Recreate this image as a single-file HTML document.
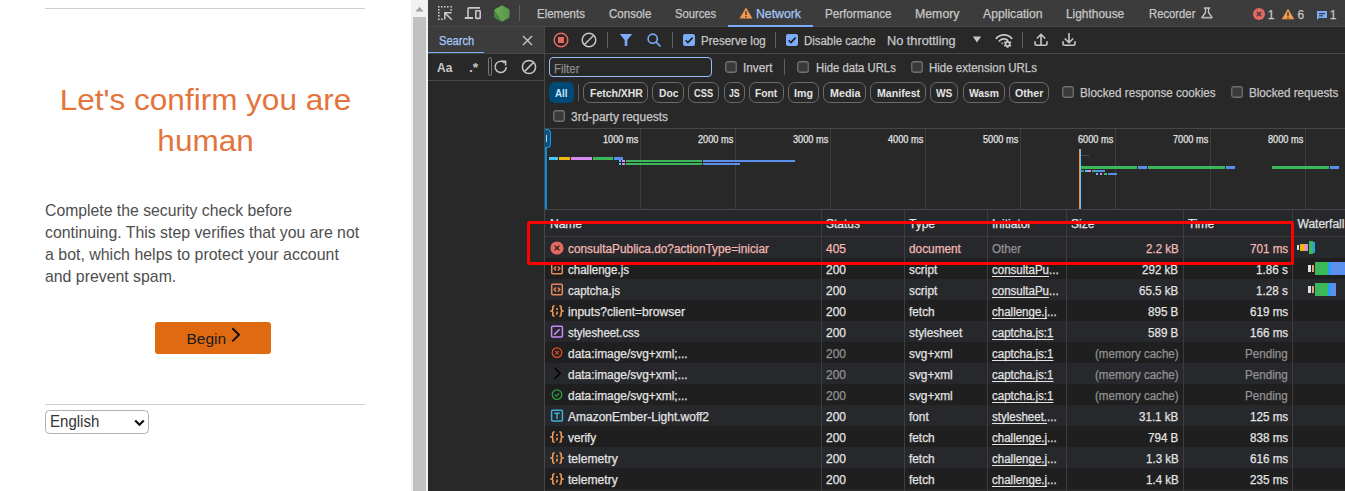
<!DOCTYPE html>
<html><head><meta charset="utf-8">
<style>
*{margin:0;padding:0;box-sizing:border-box}
html,body{width:1345px;height:491px;overflow:hidden;background:#fff;font-family:"Liberation Sans",sans-serif;position:relative}
.a{position:absolute}
.t{position:absolute;white-space:nowrap;-webkit-text-stroke:0.25px currentColor}
#page{position:absolute;left:0;top:0;width:411px;height:491px;background:#fff}
.hr{position:absolute;left:45px;width:320px;height:1px;background:#cfcfcf}
.h1{position:absolute;left:0;width:411px;text-align:center;color:#e06d30;font-size:30px;letter-spacing:0.5px;line-height:40.5px;top:80px;font-weight:400}
.p{position:absolute;left:45px;top:200px;font-size:15.7px;line-height:22px;color:#333}
.btn{position:absolute;left:155px;top:322px;width:116px;height:32px;background:#e06a12;border-radius:3px}
.sel{position:absolute;left:45px;top:410px;width:103.5px;height:24px;border:1px solid #b0b0b0;border-radius:4.5px;background:#fff}
</style></head><body>
<div id="page">
  <div class="hr" style="top:8px"></div>
  <div class="a" style="left:0;top:80px;width:411px;text-align:center;font-size:30px;line-height:40.5px;color:#e3743b;transform:scaleX(1.05);transform-origin:205.5px 0;white-space:nowrap">Let's confirm you are</div>
  <div class="a" style="left:0;top:120.5px;width:411px;text-align:center;font-size:30px;line-height:40.5px;color:#e3743b;transform:scaleX(1.05);transform-origin:205px 0;white-space:nowrap">human</div>
  <div class="a" style="left:45px;top:200px;font-size:15.7px;line-height:22px;color:#4e4e4e;white-space:nowrap;transform:scaleX(1.005);transform-origin:0 0">Complete the security check before</div>
  <div class="a" style="left:45px;top:222px;font-size:15.7px;line-height:22px;color:#4e4e4e;white-space:nowrap;transform:scaleX(1.01);transform-origin:0 0">continuing. This step verifies that you are not</div>
  <div class="a" style="left:45px;top:244px;font-size:15.7px;line-height:22px;color:#4e4e4e;white-space:nowrap;transform:scaleX(1.015);transform-origin:0 0">a bot, which helps to protect your account</div>
  <div class="a" style="left:45px;top:266px;font-size:15.7px;line-height:22px;color:#4e4e4e;white-space:nowrap;transform:scaleX(1.01);transform-origin:0 0">and prevent spam.</div>
  <div class="btn"><span class="a" style="left:31.5px;top:7.5px;font-size:15.5px;line-height:17px;color:#1a1a1a;white-space:nowrap">Begin</span><svg class="a" style="left:75px;top:5px" width="11" height="17" viewBox="0 0 11 17"><path d="M2.3 1.2 L9 7.8 L2.3 14.4" fill="none" stroke="#111" stroke-width="2"/></svg></div>
  <div class="hr" style="top:404px"></div>
  <div class="sel"><span class="a" style="left:4.3px;top:2px;font-size:16px;line-height:17px;color:#333;transform:scaleX(0.94);transform-origin:0 0;white-space:nowrap">English</span><svg class="a" style="left:88px;top:8px" width="11" height="8" viewBox="0 0 11 8"><path d="M1.2 1.5 L5.5 5.8 L9.8 1.5" fill="none" stroke="#111" stroke-width="2.2"/></svg></div>
</div>

<div class="a" style="left:411px;top:0;width:17px;height:491px;background:#f1f1f1"></div>
<div class="a" style="left:413px;top:17px;width:13px;height:474px;background:#c1c1c1"></div>
<svg class="a" style="left:415px;top:6px" width="9" height="6" viewBox="0 0 9 6"><path d="M0.5 5.5 L4.5 0.8 L8.5 5.5 Z" fill="#a3a3a3"/></svg>
<div class="a" style="left:428px;top:0px;width:917px;height:491px;background:#282828;"></div>
<div class="a" style="left:428px;top:0px;width:917px;height:26px;background:#3c3c3c;"></div>
<div class="a" style="left:428px;top:26px;width:917px;height:1px;background:#474747;"></div>
<div class="a" style="left:428px;top:27px;width:116px;height:26px;background:#3c3c3c;"></div>
<div class="a" style="left:428px;top:52px;width:56px;height:2px;background:#7cacf8;"></div>
<div class="a" style="left:428px;top:53px;width:917px;height:1px;background:#474747;"></div>
<div class="a" style="left:428px;top:80px;width:116px;height:1px;background:#474747;"></div>
<div class="a" style="left:544px;top:27px;width:1px;height:464px;background:#474747;"></div>
<div class="a" style="left:545px;top:128px;width:800px;height:1px;background:#474747;"></div>
<div class="a" style="left:545px;top:209px;width:800px;height:1px;background:#474747;"></div>
<svg class="a" style="left:438px;top:6px;" width="15" height="15" viewBox="0 0 15 15"><g fill="#c7c7c7"><rect x="0" y="0" width="1.6" height="1.6"/><rect x="3" y="0" width="1.6" height="1.6"/><rect x="6" y="0" width="1.6" height="1.6"/><rect x="9" y="0" width="1.6" height="1.6"/><rect x="12.4" y="0" width="1.6" height="1.6"/><rect x="0" y="3" width="1.6" height="1.6"/><rect x="0" y="6" width="1.6" height="1.6"/><rect x="0" y="9" width="1.6" height="1.6"/><rect x="0" y="12.4" width="1.6" height="1.6"/><rect x="12.4" y="3" width="1.6" height="1.6"/><rect x="3" y="12.4" width="1.6" height="1.6"/></g><path d="M6.6 6.6 L13.8 13.8 M6 6.8 H13.5 M6.8 6 V13.5" stroke="#c7c7c7" stroke-width="1.5" fill="none"/></svg>
<svg class="a" style="left:464px;top:6px;" width="18" height="14" viewBox="0 0 18 14"><path d="M4 12 V3 Q4 1.9 5.1 1.9 H16" stroke="#c7c7c7" stroke-width="1.6" fill="none"/><path d="M0.8 12 H9" stroke="#c7c7c7" stroke-width="2"/><rect x="11.8" y="4.8" width="4.4" height="7.6" rx="0.6" stroke="#c7c7c7" stroke-width="1.6" fill="none"/></svg>
<svg class="a" style="left:494px;top:5px;" width="16" height="17" viewBox="0 0 16 17"><defs><linearGradient id="ng" x1="0" x2="1"><stop offset="0" stop-color="#6aaf52"/><stop offset="1" stop-color="#5a9450"/></linearGradient></defs><path d="M8 0.3 L15.5 4.5 V12.5 L8 16.7 L0.5 12.5 V4.5 Z" fill="url(#ng)"/><path d="M0.5 5 L8 16.7 L0.5 12.5 Z" fill="#3f8a3a"/></svg>
<div class="a" style="left:519px;top:5px;width:1px;height:16px;background:#5e5e5e;"></div>
<svg class="a" style="left:739px;top:7px;" width="14" height="12" viewBox="0 0 14 12"><path d="M7 0.5 L13.5 11.5 H0.5 Z" fill="#f29952"/><rect x="6.3" y="4" width="1.4" height="4" fill="#3c3c3c"/><rect x="6.3" y="9" width="1.4" height="1.4" fill="#3c3c3c"/></svg>
<div class="a" style="left:728px;top:25px;width:85px;height:2px;background:#7cacf8;"></div>
<svg class="a" style="left:1200px;top:6px;" width="14" height="14" viewBox="0 0 14 14"><path d="M3.8 2 H10.2" stroke="#c7c7c7" stroke-width="1.4"/><path d="M5.5 2 V6.5 L1.8 11.6 H12.2 L8.5 6.5 V2" stroke="#c7c7c7" stroke-width="1.3" fill="none" stroke-linejoin="round"/><path d="M2.3 11.6 H11.7" stroke="#b0b0b0" stroke-width="1.6"/></svg>
<svg class="a" style="left:1253px;top:8px;" width="12" height="12" viewBox="0 0 12 12"><circle cx="6" cy="6" r="6" fill="#e46962"/><path d="M3.8 3.8 L8.2 8.2 M8.2 3.8 L3.8 8.2" stroke="#3c3c3c" stroke-width="1.3"/></svg>
<svg class="a" style="left:1281px;top:8px;" width="14" height="12" viewBox="0 0 14 12"><path d="M7 0.8 L13.3 11.3 H0.7 Z" fill="#f29952"/><rect x="6.3" y="4" width="1.4" height="4" fill="#3c3c3c"/><rect x="6.3" y="9" width="1.4" height="1.4" fill="#3c3c3c"/></svg>
<svg class="a" style="left:1316px;top:10px;" width="12" height="11" viewBox="0 0 12 11"><path d="M1 1 H11 V8 H3 L1 10 Z" fill="#7cacf8"/><rect x="3" y="3" width="6" height="1.2" fill="#3c3c3c"/><rect x="3" y="5.2" width="4" height="1.2" fill="#3c3c3c"/></svg>
<svg class="a" style="left:522px;top:34.5px;" width="11" height="11" viewBox="0 0 11 11"><path d="M1 1 L10 10 M10 1 L1 10" stroke="#c7c7c7" stroke-width="1.4"/></svg>
<svg class="a" style="left:553px;top:32px;" width="16" height="16" viewBox="0 0 16 16"><circle cx="8" cy="8" r="6.8" stroke="#e46962" stroke-width="1.5" fill="none"/><rect x="5" y="5" width="6" height="6" fill="#e46962"/></svg>
<svg class="a" style="left:581px;top:32px;" width="16" height="16" viewBox="0 0 16 16"><circle cx="8" cy="8" r="6.8" stroke="#c7c7c7" stroke-width="1.5" fill="none"/><path d="M12.8 3.2 L3.2 12.8" stroke="#c7c7c7" stroke-width="1.5"/></svg>
<div class="a" style="left:607px;top:32px;width:1px;height:16px;background:#5e5e5e;"></div>
<svg class="a" style="left:619px;top:33px;" width="14" height="14" viewBox="0 0 14 14"><path d="M0.8 1 H13.2 L8.3 7 V13 H5.7 V7 Z" fill="#7cacf8"/></svg>
<svg class="a" style="left:646px;top:32px;" width="16" height="16" viewBox="0 0 16 16"><circle cx="6.7" cy="6.7" r="4.6" stroke="#7cacf8" stroke-width="1.6" fill="none"/><path d="M10 10 L14.5 14.5" stroke="#7cacf8" stroke-width="1.7"/></svg>
<div class="a" style="left:672px;top:32px;width:1px;height:16px;background:#5e5e5e;"></div>
<svg class="a" style="left:683px;top:34px;" width="12" height="12" viewBox="0 0 12 12"><rect x="0" y="0" width="12" height="12" rx="2" fill="#7cacf8"/><path d="M2.6 6.2 L4.9 8.5 L9.6 3.6" stroke="#1f1f1f" stroke-width="1.6" fill="none"/></svg>
<div class="a" style="left:775px;top:32px;width:1px;height:16px;background:#5e5e5e;"></div>
<svg class="a" style="left:786px;top:34px;" width="12" height="12" viewBox="0 0 12 12"><rect x="0" y="0" width="12" height="12" rx="2" fill="#7cacf8"/><path d="M2.6 6.2 L4.9 8.5 L9.6 3.6" stroke="#1f1f1f" stroke-width="1.6" fill="none"/></svg>
<svg class="a" style="left:972px;top:36px;" width="10" height="7" viewBox="0 0 10 7"><path d="M0.8 0.5 H9.2 L5 6.5 Z" fill="#c7c7c7"/></svg>
<svg class="a" style="left:995px;top:32px;" width="18" height="16" viewBox="0 0 18 16"><path d="M1.3 6.3 A 10.5 10.5 0 0 1 16.7 6.3" stroke="#c7c7c7" stroke-width="1.7" fill="none" stroke-linecap="round"/><path d="M4.2 9 A 6.5 6.5 0 0 1 12.3 8" stroke="#c7c7c7" stroke-width="1.7" fill="none" stroke-linecap="round"/><path d="M6.2 10.2 L8.6 11.2 L6.9 12.6 Z" fill="#c7c7c7"/><g transform="translate(12.6 12)" fill="#c7c7c7"><rect x="-0.9" y="-3.9" width="1.8" height="2" transform="rotate(0)"/><rect x="-0.9" y="-3.9" width="1.8" height="2" transform="rotate(60)"/><rect x="-0.9" y="-3.9" width="1.8" height="2" transform="rotate(120)"/><rect x="-0.9" y="-3.9" width="1.8" height="2" transform="rotate(180)"/><rect x="-0.9" y="-3.9" width="1.8" height="2" transform="rotate(240)"/><rect x="-0.9" y="-3.9" width="1.8" height="2" transform="rotate(300)"/><circle r="2.9"/><circle r="1.2" fill="#282828"/></g></svg>
<div class="a" style="left:1022px;top:32px;width:1px;height:16px;background:#5e5e5e;"></div>
<svg class="a" style="left:1034px;top:32px;" width="14" height="15" viewBox="0 0 14 15"><path d="M7 13 V2.5 M2.8 6.5 L7 2.3 L11.2 6.5" stroke="#c7c7c7" stroke-width="1.6" fill="none"/><path d="M1 9.8 V11.8 Q1 13.2 2.4 13.2 H11.6 Q13 13.2 13 11.8 V9.8" stroke="#c7c7c7" stroke-width="1.6" fill="none" stroke-linecap="round"/></svg>
<svg class="a" style="left:1062px;top:32px;" width="14" height="15" viewBox="0 0 14 15"><path d="M7 1 V10.5 M2.8 6.5 L7 10.7 L11.2 6.5" stroke="#c7c7c7" stroke-width="1.6" fill="none"/><path d="M1 9.8 V11.8 Q1 13.2 2.4 13.2 H11.6 Q13 13.2 13 11.8 V9.8" stroke="#c7c7c7" stroke-width="1.6" fill="none" stroke-linecap="round"/></svg>
<div class="a" style="left:488px;top:57px;width:4px;height:19px;background:transparent;border:1px solid #777;border-radius:2px;"></div>
<svg class="a" style="left:493px;top:59px;" width="16" height="16" viewBox="0 0 16 16"><path d="M13.3 8 A 5.6 5.6 0 1 1 11.6 3.9" stroke="#c7c7c7" stroke-width="1.5" fill="none"/><path d="M8.5 2.3 H12.6 V6.4" stroke="#c7c7c7" stroke-width="1.5" fill="none"/></svg>
<svg class="a" style="left:521px;top:59px;" width="16" height="16" viewBox="0 0 16 16"><circle cx="8" cy="8" r="6.6" stroke="#c7c7c7" stroke-width="1.5" fill="none"/><path d="M12.6 3.4 L3.4 12.6" stroke="#c7c7c7" stroke-width="1.5"/></svg>
<div class="a" style="left:549px;top:57px;width:163px;height:20px;background:transparent;border:1px solid #99bdf9;border-radius:4px;"></div>
<svg class="a" style="left:725px;top:61px;" width="12" height="12" viewBox="0 0 12 12"><rect x="0.75" y="0.75" width="10.5" height="10.5" rx="2" fill="#3a3a3a" stroke="#707070" stroke-width="1.3"/></svg>
<div class="a" style="left:784px;top:59px;width:1px;height:16px;background:#5e5e5e;"></div>
<svg class="a" style="left:797px;top:61px;" width="12" height="12" viewBox="0 0 12 12"><rect x="0.75" y="0.75" width="10.5" height="10.5" rx="2" fill="#3a3a3a" stroke="#707070" stroke-width="1.3"/></svg>
<svg class="a" style="left:911px;top:61px;" width="12" height="12" viewBox="0 0 12 12"><rect x="0.75" y="0.75" width="10.5" height="10.5" rx="2" fill="#3a3a3a" stroke="#707070" stroke-width="1.3"/></svg>
<div class="a" style="left:549px;top:82px;width:25px;height:21px;background:#004a77;border-radius:6px;"></div>
<div class="a" style="left:578px;top:84px;width:1px;height:17px;background:#5e5e5e;"></div>
<div class="a" style="left:583.2px;top:82px;width:64.6px;height:21px;background:transparent;border:1px solid #6a6a6a;border-radius:7px;"></div>
<div class="a" style="left:652px;top:82px;width:31.5px;height:21px;background:transparent;border:1px solid #6a6a6a;border-radius:7px;"></div>
<div class="a" style="left:688px;top:82px;width:31px;height:21px;background:transparent;border:1px solid #6a6a6a;border-radius:7px;"></div>
<div class="a" style="left:723.5px;top:82px;width:21.1px;height:21px;background:transparent;border:1px solid #6a6a6a;border-radius:7px;"></div>
<div class="a" style="left:749.3px;top:82px;width:34.4px;height:21px;background:transparent;border:1px solid #6a6a6a;border-radius:7px;"></div>
<div class="a" style="left:788.2px;top:82px;width:30.5px;height:21px;background:transparent;border:1px solid #6a6a6a;border-radius:7px;"></div>
<div class="a" style="left:823.4px;top:82px;width:42.4px;height:21px;background:transparent;border:1px solid #6a6a6a;border-radius:7px;"></div>
<div class="a" style="left:870.3px;top:82px;width:55.6px;height:21px;background:transparent;border:1px solid #6a6a6a;border-radius:7px;"></div>
<div class="a" style="left:930.1px;top:82px;width:28.4px;height:21px;background:transparent;border:1px solid #6a6a6a;border-radius:7px;"></div>
<div class="a" style="left:963.3px;top:82px;width:41.5px;height:21px;background:transparent;border:1px solid #6a6a6a;border-radius:7px;"></div>
<div class="a" style="left:1009.3px;top:82px;width:40.0px;height:21px;background:transparent;border:1px solid #6a6a6a;border-radius:7px;"></div>
<svg class="a" style="left:1062px;top:86px;" width="12" height="12" viewBox="0 0 12 12"><rect x="0.75" y="0.75" width="10.5" height="10.5" rx="2" fill="#3a3a3a" stroke="#707070" stroke-width="1.3"/></svg>
<svg class="a" style="left:1231px;top:86px;" width="12" height="12" viewBox="0 0 12 12"><rect x="0.75" y="0.75" width="10.5" height="10.5" rx="2" fill="#3a3a3a" stroke="#707070" stroke-width="1.3"/></svg>
<svg class="a" style="left:553px;top:110px;" width="12" height="12" viewBox="0 0 12 12"><rect x="0.75" y="0.75" width="10.5" height="10.5" rx="2" fill="#3a3a3a" stroke="#707070" stroke-width="1.3"/></svg>
<div class="a" style="left:640px;top:129px;width:1px;height:80px;background:#3d3d3d;"></div>
<div class="a" style="left:735px;top:129px;width:1px;height:80px;background:#3d3d3d;"></div>
<div class="a" style="left:830px;top:129px;width:1px;height:80px;background:#3d3d3d;"></div>
<div class="a" style="left:925px;top:129px;width:1px;height:80px;background:#3d3d3d;"></div>
<div class="a" style="left:1020px;top:129px;width:1px;height:80px;background:#3d3d3d;"></div>
<div class="a" style="left:1115px;top:129px;width:1px;height:80px;background:#3d3d3d;"></div>
<div class="a" style="left:1210px;top:129px;width:1px;height:80px;background:#3d3d3d;"></div>
<div class="a" style="left:1305px;top:129px;width:1px;height:80px;background:#3d3d3d;"></div>
<div class="a" style="left:545px;top:210px;width:800px;height:26px;background:#27282b;"></div>
<div class="a" style="left:545px;top:146px;width:2px;height:63px;background:#0a8fd6;"></div>
<div class="a" style="left:545px;top:129px;width:5.5px;height:18.5px;background:#0b5285;border:1px solid #0c9ae3;border-left:none;border-radius:0 4px 4px 0;"></div>
<div class="a" style="left:546px;top:135px;width:1.3px;height:7px;background:#b8cdf7;"></div>
<div class="a" style="left:549px;top:157px;width:9px;height:2.7px;background:#4fc3f7;"></div>
<div class="a" style="left:559px;top:157px;width:11px;height:2.7px;background:#f0b50e;"></div>
<div class="a" style="left:571px;top:157px;width:20.5px;height:2.7px;background:#d68bf5;"></div>
<div class="a" style="left:592.7px;top:157px;width:20.3px;height:2.7px;background:#3bb85a;"></div>
<div class="a" style="left:614px;top:157px;width:9px;height:2.7px;background:#5a8fee;"></div>
<div class="a" style="left:618.6px;top:160.2px;width:2.4px;height:2.3px;background:#4fc3f7;"></div>
<div class="a" style="left:622px;top:160.2px;width:3px;height:2.3px;background:#d68bf5;"></div>
<div class="a" style="left:626px;top:160.2px;width:76.2px;height:2.3px;background:#3bb85a;"></div>
<div class="a" style="left:703px;top:160.2px;width:92.2px;height:2.3px;background:#5a8fee;"></div>
<div class="a" style="left:618.6px;top:163.2px;width:2.4px;height:2.3px;background:#4fc3f7;"></div>
<div class="a" style="left:622px;top:163.2px;width:3px;height:2.3px;background:#d68bf5;"></div>
<div class="a" style="left:626px;top:163.2px;width:76.2px;height:2.3px;background:#3bb85a;"></div>
<div class="a" style="left:703px;top:163.2px;width:37px;height:2.3px;background:#5a8fee;"></div>
<div class="a" style="left:1079px;top:149px;width:1px;height:60px;background:#f28b54;"></div>
<div class="a" style="left:1080px;top:149px;width:1px;height:60px;background:#4fd3f7;"></div>
<div class="a" style="left:1081.4px;top:154.6px;width:7.9px;height:1.8px;background:#4a4a4a;"></div>
<div class="a" style="left:1081px;top:166.3px;width:56px;height:2.6px;background:#3bb85a;"></div>
<div class="a" style="left:1138px;top:166.3px;width:9px;height:2.6px;background:#5a8fee;"></div>
<div class="a" style="left:1148px;top:166.3px;width:77px;height:2.6px;background:#3bb85a;"></div>
<div class="a" style="left:1225.5px;top:166.3px;width:9.5px;height:2.6px;background:#5a8fee;"></div>
<div class="a" style="left:1272px;top:166.3px;width:57px;height:2.6px;background:#3bb85a;"></div>
<div class="a" style="left:1330px;top:166.3px;width:9px;height:2.6px;background:#5a8fee;"></div>
<div class="a" style="left:1081px;top:169.6px;width:3px;height:2.1px;background:#777;"></div>
<div class="a" style="left:1085px;top:169.6px;width:2.5px;height:2.1px;background:#4fc3f7;"></div>
<div class="a" style="left:1088px;top:169.6px;width:3px;height:2.1px;background:#d68bf5;"></div>
<div class="a" style="left:1092px;top:169.6px;width:2.5px;height:2.1px;background:#3bb85a;"></div>
<div class="a" style="left:1095.3px;top:169.6px;width:9.5px;height:2.1px;background:#5a8fee;"></div>
<div class="a" style="left:1096.4px;top:172.5px;width:2.1px;height:2.3px;background:#4fc3f7;"></div>
<div class="a" style="left:1099.7px;top:172.5px;width:2.7px;height:2.3px;background:#d68bf5;"></div>
<div class="a" style="left:1103.8px;top:172.5px;width:3.2px;height:2.3px;background:#3bb85a;"></div>
<div class="a" style="left:1107.8px;top:172.5px;width:9.2px;height:2.3px;background:#5a8fee;"></div>
<div class="a" style="left:545px;top:237px;width:800px;height:21px;background:#27282b;"></div>
<div class="a" style="left:545px;top:258px;width:800px;height:21px;background:#1f1f1f;"></div>
<div class="a" style="left:545px;top:279px;width:800px;height:21px;background:#27282b;"></div>
<div class="a" style="left:545px;top:300px;width:800px;height:21px;background:#1f1f1f;"></div>
<div class="a" style="left:545px;top:321px;width:800px;height:21px;background:#27282b;"></div>
<div class="a" style="left:545px;top:342px;width:800px;height:21px;background:#1f1f1f;"></div>
<div class="a" style="left:545px;top:363px;width:800px;height:21px;background:#27282b;"></div>
<div class="a" style="left:545px;top:384px;width:800px;height:21px;background:#1f1f1f;"></div>
<div class="a" style="left:545px;top:405px;width:800px;height:21px;background:#27282b;"></div>
<div class="a" style="left:545px;top:426px;width:800px;height:21px;background:#1f1f1f;"></div>
<div class="a" style="left:545px;top:447px;width:800px;height:21px;background:#27282b;"></div>
<div class="a" style="left:545px;top:468px;width:800px;height:21px;background:#1f1f1f;"></div>
<div class="a" style="left:821px;top:210px;width:1px;height:281px;background:#3d3d3d;"></div>
<div class="a" style="left:904px;top:210px;width:1px;height:281px;background:#3d3d3d;"></div>
<div class="a" style="left:987px;top:210px;width:1px;height:281px;background:#3d3d3d;"></div>
<div class="a" style="left:1066px;top:210px;width:1px;height:281px;background:#3d3d3d;"></div>
<div class="a" style="left:1183px;top:210px;width:1px;height:281px;background:#3d3d3d;"></div>
<div class="a" style="left:1292px;top:210px;width:1px;height:281px;background:#3d3d3d;"></div>
<div class="a" style="left:545px;top:236px;width:800px;height:1px;background:#3d3d3d;"></div>
<svg class="a" style="left:550px;top:241px;" width="14" height="14" viewBox="0 0 14 14"><circle cx="7" cy="7" r="6.6" fill="#e46962"/><path d="M4.6 4.6 L9.4 9.4 M9.4 4.6 L4.6 9.4" stroke="#1f1f1f" stroke-width="1.3"/></svg>
<svg class="a" style="left:550px;top:262px;" width="14" height="14" viewBox="0 0 14 14"><rect x="1.7" y="1.2" width="10.6" height="10.6" rx="1" stroke="#e8875a" stroke-width="1.5" fill="none"/><path d="M6.1 4.6 L4.2 6.5 L6.1 8.4 M7.9 4.6 L9.8 6.5 L7.9 8.4" stroke="#e8875a" stroke-width="1.4" fill="none"/></svg>
<svg class="a" style="left:550px;top:283px;" width="14" height="14" viewBox="0 0 14 14"><rect x="1.7" y="1.2" width="10.6" height="10.6" rx="1" stroke="#e8875a" stroke-width="1.5" fill="none"/><path d="M6.1 4.6 L4.2 6.5 L6.1 8.4 M7.9 4.6 L9.8 6.5 L7.9 8.4" stroke="#e8875a" stroke-width="1.4" fill="none"/></svg>
<svg class="a" style="left:550px;top:304px;" width="14" height="14" viewBox="0 0 14 14"><path d="M4.6 1.8 Q2.8 1.8 2.8 3.5 V5.4 Q2.8 6.6 1.3 7 Q2.8 7.4 2.8 8.6 V10.5 Q2.8 12.2 4.6 12.2 M9.4 1.8 Q11.2 1.8 11.2 3.5 V5.4 Q11.2 6.6 12.7 7 Q11.2 7.4 11.2 8.6 V10.5 Q11.2 12.2 9.4 12.2" stroke="#f09a5a" stroke-width="1.6" fill="none"/><circle cx="7" cy="4.9" r="1" fill="#f09a5a"/><path d="M7.1 7.4 V9.4 L6.2 10.4" stroke="#f09a5a" stroke-width="1.5" fill="none"/></svg>
<svg class="a" style="left:550px;top:325px;" width="14" height="14" viewBox="0 0 14 14"><rect x="1.6" y="1.2" width="10.8" height="10.8" rx="1" stroke="#c58af9" stroke-width="1.5" fill="none"/><path d="M4.2 9.6 L9.6 4.2" stroke="#c58af9" stroke-width="1.6"/></svg>
<svg class="a" style="left:550px;top:346px;" width="14" height="14" viewBox="0 0 14 14"><circle cx="7" cy="6.6" r="4.8" stroke="#e2502f" stroke-width="1.2" fill="none"/><path d="M5.3 4.9 L8.7 8.3 M8.7 4.9 L5.3 8.3" stroke="#e2502f" stroke-width="1.1"/></svg>
<svg class="a" style="left:550px;top:366px;" width="14" height="15" viewBox="0 0 14 15"><path d="M4.5 1.8 L10 7.3 L4.5 12.8" stroke="#000" stroke-width="1.6" fill="none"/></svg>
<svg class="a" style="left:550px;top:388px;" width="14" height="14" viewBox="0 0 14 14"><circle cx="7" cy="6.6" r="4.8" stroke="#2aa53a" stroke-width="1.2" fill="none"/><path d="M4.9 6.7 L6.4 8.2 L9.2 5.4" stroke="#2aa53a" stroke-width="1.2" fill="none"/></svg>
<svg class="a" style="left:550px;top:409px;" width="14" height="14" viewBox="0 0 14 14"><rect x="1.6" y="1.2" width="10.8" height="10.8" rx="1" stroke="#3fb1d6" stroke-width="1.5" fill="none"/><path d="M4.3 4.3 H9.7 M7 4.3 V10" stroke="#3fb1d6" stroke-width="1.5"/></svg>
<svg class="a" style="left:550px;top:430px;" width="14" height="14" viewBox="0 0 14 14"><path d="M4.6 1.8 Q2.8 1.8 2.8 3.5 V5.4 Q2.8 6.6 1.3 7 Q2.8 7.4 2.8 8.6 V10.5 Q2.8 12.2 4.6 12.2 M9.4 1.8 Q11.2 1.8 11.2 3.5 V5.4 Q11.2 6.6 12.7 7 Q11.2 7.4 11.2 8.6 V10.5 Q11.2 12.2 9.4 12.2" stroke="#f09a5a" stroke-width="1.6" fill="none"/><circle cx="7" cy="4.9" r="1" fill="#f09a5a"/><path d="M7.1 7.4 V9.4 L6.2 10.4" stroke="#f09a5a" stroke-width="1.5" fill="none"/></svg>
<svg class="a" style="left:550px;top:451px;" width="14" height="14" viewBox="0 0 14 14"><path d="M4.6 1.8 Q2.8 1.8 2.8 3.5 V5.4 Q2.8 6.6 1.3 7 Q2.8 7.4 2.8 8.6 V10.5 Q2.8 12.2 4.6 12.2 M9.4 1.8 Q11.2 1.8 11.2 3.5 V5.4 Q11.2 6.6 12.7 7 Q11.2 7.4 11.2 8.6 V10.5 Q11.2 12.2 9.4 12.2" stroke="#f09a5a" stroke-width="1.6" fill="none"/><circle cx="7" cy="4.9" r="1" fill="#f09a5a"/><path d="M7.1 7.4 V9.4 L6.2 10.4" stroke="#f09a5a" stroke-width="1.5" fill="none"/></svg>
<svg class="a" style="left:550px;top:472px;" width="14" height="14" viewBox="0 0 14 14"><path d="M4.6 1.8 Q2.8 1.8 2.8 3.5 V5.4 Q2.8 6.6 1.3 7 Q2.8 7.4 2.8 8.6 V10.5 Q2.8 12.2 4.6 12.2 M9.4 1.8 Q11.2 1.8 11.2 3.5 V5.4 Q11.2 6.6 12.7 7 Q11.2 7.4 11.2 8.6 V10.5 Q11.2 12.2 9.4 12.2" stroke="#f09a5a" stroke-width="1.6" fill="none"/><circle cx="7" cy="4.9" r="1" fill="#f09a5a"/><path d="M7.1 7.4 V9.4 L6.2 10.4" stroke="#f09a5a" stroke-width="1.5" fill="none"/></svg>
<div class="a" style="left:1296.8px;top:244.9px;width:2.3px;height:5.2px;background:#e0e0e0;"></div>
<div class="a" style="left:1300.2px;top:243.8px;width:4.8px;height:7.2px;background:#f0b50e;"></div>
<div class="a" style="left:1305px;top:243.8px;width:3.2px;height:7.2px;background:#d68bf5;"></div>
<div class="a" style="left:1308.9px;top:241px;width:4.3px;height:13px;background:#3bb85a;"></div>
<div class="a" style="left:1313.2px;top:241.9px;width:1.8px;height:11.1px;background:#1aa3f5;"></div>
<div class="a" style="left:1307.9px;top:265.3px;width:3px;height:6.6px;background:#e0e0e0;"></div>
<div class="a" style="left:1311.9px;top:265.3px;width:1.2px;height:6.6px;background:#f0b50e;"></div>
<div class="a" style="left:1313.1px;top:265.3px;width:1px;height:6.6px;background:#d68bf5;"></div>
<div class="a" style="left:1314.8px;top:261.8px;width:13.2px;height:13px;background:#3bb85a;"></div>
<div class="a" style="left:1328px;top:261.8px;width:1.5px;height:13px;background:#1aa3f5;"></div>
<div class="a" style="left:1329.5px;top:261.8px;width:15.5px;height:13px;background:#5a8fee;"></div>
<div class="a" style="left:1307.9px;top:286.3px;width:3px;height:6.6px;background:#e0e0e0;"></div>
<div class="a" style="left:1311.9px;top:286.3px;width:1.2px;height:6.6px;background:#f0b50e;"></div>
<div class="a" style="left:1313.1px;top:286.3px;width:1px;height:6.6px;background:#d68bf5;"></div>
<div class="a" style="left:1314.8px;top:282.7px;width:13.2px;height:13.3px;background:#3bb85a;"></div>
<div class="a" style="left:1328px;top:282.7px;width:1.5px;height:13.3px;background:#1aa3f5;"></div>
<div class="a" style="left:1329.5px;top:282.7px;width:6.4px;height:13.3px;background:#5a8fee;"></div>
<div class="t" style="left:537.30px;top:6.84px;font-size:12px;line-height:14px;color:#c7c7c7;font-weight:400;transform:scaleX(0.9576);transform-origin:0 0;">Elements</div>
<div class="t" style="left:608.70px;top:6.84px;font-size:12px;line-height:14px;color:#c7c7c7;font-weight:400;transform:scaleX(0.9608);transform-origin:0 0;">Console</div>
<div class="t" style="left:674.50px;top:6.84px;font-size:12px;line-height:14px;color:#c7c7c7;font-weight:400;transform:scaleX(0.9359);transform-origin:0 0;">Sources</div>
<div class="t" style="left:755.70px;top:6.84px;font-size:12px;line-height:14px;color:#a8c7fa;font-weight:400;transform:scaleX(1.0225);transform-origin:0 0;">Network</div>
<div class="t" style="left:824.80px;top:6.84px;font-size:12px;line-height:14px;color:#c7c7c7;font-weight:400;transform:scaleX(0.9680);transform-origin:0 0;">Performance</div>
<div class="t" style="left:914.50px;top:6.84px;font-size:12px;line-height:14px;color:#c7c7c7;font-weight:400;transform:scaleX(1.0269);transform-origin:0 0;">Memory</div>
<div class="t" style="left:982.80px;top:6.84px;font-size:12px;line-height:14px;color:#c7c7c7;font-weight:400;transform:scaleX(1.0152);transform-origin:0 0;">Application</div>
<div class="t" style="left:1066.40px;top:6.84px;font-size:12px;line-height:14px;color:#c7c7c7;font-weight:400;transform:scaleX(0.9912);transform-origin:0 0;">Lighthouse</div>
<div class="t" style="left:1148.60px;top:6.84px;font-size:12px;line-height:14px;color:#c7c7c7;font-weight:400;transform:scaleX(0.9402);transform-origin:0 0;">Recorder</div>
<div class="t" style="left:1267.80px;top:7.84px;font-size:12px;line-height:14px;color:#c7c7c7;font-weight:400;">1</div>
<div class="t" style="left:1297.60px;top:7.84px;font-size:12px;line-height:14px;color:#c7c7c7;font-weight:400;">6</div>
<div class="t" style="left:1329.80px;top:7.84px;font-size:12px;line-height:14px;color:#c7c7c7;font-weight:400;">1</div>
<div class="t" style="left:438.50px;top:33.84px;font-size:12px;line-height:14px;color:#a8c7fa;font-weight:400;transform:scaleX(0.9258);transform-origin:0 0;">Search</div>
<div class="t" style="left:701.00px;top:33.84px;font-size:12px;line-height:14px;color:#c7c7c7;font-weight:400;transform:scaleX(0.9604);transform-origin:0 0;">Preserve log</div>
<div class="t" style="left:804.30px;top:33.84px;font-size:12px;line-height:14px;color:#c7c7c7;font-weight:400;transform:scaleX(0.9512);transform-origin:0 0;">Disable cache</div>
<div class="t" style="left:887.30px;top:33.84px;font-size:12px;line-height:14px;color:#c7c7c7;font-weight:400;transform:scaleX(1.0618);transform-origin:0 0;">No throttling</div>
<div class="t" style="left:437.20px;top:60.84px;font-size:12px;line-height:14px;color:#c7c7c7;font-weight:700;transform:scaleX(0.9974);transform-origin:0 0;-webkit-text-stroke:0;">Aa</div>
<div class="t" style="left:468.70px;top:59.50px;font-size:13px;line-height:16px;color:#c7c7c7;font-weight:700;transform:scaleX(1.0726);transform-origin:0 0;-webkit-text-stroke:0;">.*</div>
<div class="t" style="left:553.50px;top:61.84px;font-size:12px;line-height:14px;color:#8a8a8a;font-weight:400;transform:scaleX(0.9563);transform-origin:0 0;">Filter</div>
<div class="t" style="left:743.40px;top:60.84px;font-size:12px;line-height:14px;color:#c7c7c7;font-weight:400;transform:scaleX(0.9796);transform-origin:0 0;">Invert</div>
<div class="t" style="left:815.70px;top:60.84px;font-size:12px;line-height:14px;color:#c7c7c7;font-weight:400;transform:scaleX(0.9420);transform-origin:0 0;">Hide data URLs</div>
<div class="t" style="left:929.40px;top:60.84px;font-size:12px;line-height:14px;color:#c7c7c7;font-weight:400;transform:scaleX(0.9581);transform-origin:0 0;">Hide extension URLs</div>
<div class="t" style="left:555.40px;top:86.69px;font-size:11px;line-height:13px;color:#c2e7ff;font-weight:700;transform:scaleX(0.8964);transform-origin:0 0;-webkit-text-stroke:0;">All</div>
<div class="t" style="left:589.60px;top:86.69px;font-size:11px;line-height:13px;color:#e3e3e3;font-weight:700;transform:scaleX(0.9511);transform-origin:0 0;-webkit-text-stroke:0;">Fetch/XHR</div>
<div class="t" style="left:658.80px;top:86.69px;font-size:11px;line-height:13px;color:#e3e3e3;font-weight:700;transform:scaleX(0.9336);transform-origin:0 0;-webkit-text-stroke:0;">Doc</div>
<div class="t" style="left:693.90px;top:86.69px;font-size:11px;line-height:13px;color:#e3e3e3;font-weight:700;transform:scaleX(0.8445);transform-origin:0 0;-webkit-text-stroke:0;">CSS</div>
<div class="t" style="left:728.50px;top:86.69px;font-size:11px;line-height:13px;color:#e3e3e3;font-weight:700;transform:scaleX(0.7953);transform-origin:0 0;-webkit-text-stroke:0;">JS</div>
<div class="t" style="left:755.40px;top:86.69px;font-size:11px;line-height:13px;color:#e3e3e3;font-weight:700;transform:scaleX(0.9320);transform-origin:0 0;-webkit-text-stroke:0;">Font</div>
<div class="t" style="left:793.80px;top:86.69px;font-size:11px;line-height:13px;color:#e3e3e3;font-weight:700;transform:scaleX(0.9716);transform-origin:0 0;-webkit-text-stroke:0;">Img</div>
<div class="t" style="left:829.50px;top:86.69px;font-size:11px;line-height:13px;color:#e3e3e3;font-weight:700;transform:scaleX(0.9784);transform-origin:0 0;-webkit-text-stroke:0;">Media</div>
<div class="t" style="left:876.90px;top:86.69px;font-size:11px;line-height:13px;color:#e3e3e3;font-weight:700;transform:scaleX(0.9660);transform-origin:0 0;-webkit-text-stroke:0;">Manifest</div>
<div class="t" style="left:936.00px;top:86.69px;font-size:11px;line-height:13px;color:#e3e3e3;font-weight:700;transform:scaleX(0.9255);transform-origin:0 0;-webkit-text-stroke:0;">WS</div>
<div class="t" style="left:969.00px;top:86.69px;font-size:11px;line-height:13px;color:#e3e3e3;font-weight:700;transform:scaleX(0.9378);transform-origin:0 0;-webkit-text-stroke:0;">Wasm</div>
<div class="t" style="left:1014.90px;top:86.69px;font-size:11px;line-height:13px;color:#e3e3e3;font-weight:700;transform:scaleX(0.9647);transform-origin:0 0;-webkit-text-stroke:0;">Other</div>
<div class="t" style="left:1079.90px;top:85.84px;font-size:12px;line-height:14px;color:#c7c7c7;font-weight:400;transform:scaleX(0.9727);transform-origin:0 0;">Blocked response cookies</div>
<div class="t" style="left:1248.60px;top:85.84px;font-size:12px;line-height:14px;color:#c7c7c7;font-weight:400;transform:scaleX(0.9712);transform-origin:0 0;">Blocked requests</div>
<div class="t" style="left:571.30px;top:109.84px;font-size:12px;line-height:14px;color:#c7c7c7;font-weight:400;transform:scaleX(0.9972);transform-origin:0 0;">3rd-party requests</div>
<div class="t" style="left:550.00px;top:216.84px;font-size:12px;line-height:14px;color:#e3e3e3;font-weight:400;">Name</div>
<div class="t" style="left:826.00px;top:216.84px;font-size:12px;line-height:14px;color:#e3e3e3;font-weight:400;">Status</div>
<div class="t" style="left:909.00px;top:216.84px;font-size:12px;line-height:14px;color:#e3e3e3;font-weight:400;">Type</div>
<div class="t" style="left:992.00px;top:216.84px;font-size:12px;line-height:14px;color:#e3e3e3;font-weight:400;">Initiator</div>
<div class="t" style="left:1071.00px;top:216.84px;font-size:12px;line-height:14px;color:#e3e3e3;font-weight:400;">Size</div>
<div class="t" style="left:1188.00px;top:216.84px;font-size:12px;line-height:14px;color:#e3e3e3;font-weight:400;">Time</div>
<div class="t" style="left:1297.50px;top:216.84px;font-size:12px;line-height:14px;color:#e3e3e3;font-weight:400;">Waterfall</div>
<div class="t" style="left:568.00px;top:241.84px;font-size:12px;line-height:14px;color:#f2b8b5;font-weight:400;transform:scaleX(0.9863);transform-origin:0 0;">consultaPublica.do?actionType=iniciar</div>
<div class="t" style="left:826.00px;top:241.84px;font-size:12px;line-height:14px;color:#f2b8b5;font-weight:400;">405</div>
<div class="t" style="left:909.00px;top:241.84px;font-size:12px;line-height:14px;color:#f2b8b5;font-weight:400;transform:scaleX(0.985);transform-origin:0 0;">document</div>
<div class="t" style="left:992.00px;top:241.84px;font-size:12px;line-height:14px;color:#929292;font-weight:400;transform:scaleX(0.97);transform-origin:0 0;">Other</div>
<div class="t" style="left:568.00px;top:262.84px;font-size:12px;line-height:14px;color:#e3e3e3;font-weight:400;transform:scaleX(0.9625);transform-origin:0 0;">challenge.js</div>
<div class="t" style="left:826.00px;top:262.84px;font-size:12px;line-height:14px;color:#e3e3e3;font-weight:400;">200</div>
<div class="t" style="left:909.00px;top:262.84px;font-size:12px;line-height:14px;color:#e3e3e3;font-weight:400;transform:scaleX(0.985);transform-origin:0 0;">script</div>
<div class="t" style="left:992.00px;top:262.84px;font-size:12px;line-height:14px;color:#e3e3e3;font-weight:400;transform:scaleX(0.96);transform-origin:0 0;"><span style="text-decoration:underline;text-underline-offset:2px;text-decoration-skip-ink:none">consultaPu</span>...</div>
<div class="t" style="left:568.00px;top:283.84px;font-size:12px;line-height:14px;color:#e3e3e3;font-weight:400;transform:scaleX(0.9624);transform-origin:0 0;">captcha.js</div>
<div class="t" style="left:826.00px;top:283.84px;font-size:12px;line-height:14px;color:#e3e3e3;font-weight:400;">200</div>
<div class="t" style="left:909.00px;top:283.84px;font-size:12px;line-height:14px;color:#e3e3e3;font-weight:400;transform:scaleX(0.985);transform-origin:0 0;">script</div>
<div class="t" style="left:992.00px;top:283.84px;font-size:12px;line-height:14px;color:#e3e3e3;font-weight:400;transform:scaleX(0.96);transform-origin:0 0;"><span style="text-decoration:underline;text-underline-offset:2px;text-decoration-skip-ink:none">consultaPu</span>...</div>
<div class="t" style="left:568.00px;top:304.84px;font-size:12px;line-height:14px;color:#e3e3e3;font-weight:400;transform:scaleX(1.0052);transform-origin:0 0;">inputs?client=browser</div>
<div class="t" style="left:826.00px;top:304.84px;font-size:12px;line-height:14px;color:#e3e3e3;font-weight:400;">200</div>
<div class="t" style="left:909.00px;top:304.84px;font-size:12px;line-height:14px;color:#e3e3e3;font-weight:400;transform:scaleX(0.985);transform-origin:0 0;">fetch</div>
<div class="t" style="left:992.00px;top:304.84px;font-size:12px;line-height:14px;color:#e3e3e3;font-weight:400;transform:scaleX(0.96);transform-origin:0 0;"><span style="text-decoration:underline;text-underline-offset:2px;text-decoration-skip-ink:none">challenge.j</span>...</div>
<div class="t" style="left:568.00px;top:325.84px;font-size:12px;line-height:14px;color:#e3e3e3;font-weight:400;transform:scaleX(0.9487);transform-origin:0 0;">stylesheet.css</div>
<div class="t" style="left:826.00px;top:325.84px;font-size:12px;line-height:14px;color:#e3e3e3;font-weight:400;">200</div>
<div class="t" style="left:909.00px;top:325.84px;font-size:12px;line-height:14px;color:#e3e3e3;font-weight:400;transform:scaleX(0.985);transform-origin:0 0;">stylesheet</div>
<div class="t" style="left:992.00px;top:325.84px;font-size:12px;line-height:14px;color:#e3e3e3;font-weight:400;transform:scaleX(0.96);transform-origin:0 0;text-decoration:underline;text-underline-offset:2px;text-decoration-skip-ink:none;">captcha.js:1</div>
<div class="t" style="left:568.00px;top:346.84px;font-size:12px;line-height:14px;color:#e3e3e3;font-weight:400;transform:scaleX(0.9935);transform-origin:0 0;">data:image/svg+xml;...</div>
<div class="t" style="left:826.00px;top:346.84px;font-size:12px;line-height:14px;color:#929292;font-weight:400;">200</div>
<div class="t" style="left:909.00px;top:346.84px;font-size:12px;line-height:14px;color:#e3e3e3;font-weight:400;transform:scaleX(0.985);transform-origin:0 0;">svg+xml</div>
<div class="t" style="left:992.00px;top:346.84px;font-size:12px;line-height:14px;color:#e3e3e3;font-weight:400;transform:scaleX(0.96);transform-origin:0 0;text-decoration:underline;text-underline-offset:2px;text-decoration-skip-ink:none;">captcha.js:1</div>
<div class="t" style="left:568.00px;top:367.84px;font-size:12px;line-height:14px;color:#e3e3e3;font-weight:400;transform:scaleX(0.9935);transform-origin:0 0;">data:image/svg+xml;...</div>
<div class="t" style="left:826.00px;top:367.84px;font-size:12px;line-height:14px;color:#929292;font-weight:400;">200</div>
<div class="t" style="left:909.00px;top:367.84px;font-size:12px;line-height:14px;color:#e3e3e3;font-weight:400;transform:scaleX(0.985);transform-origin:0 0;">svg+xml</div>
<div class="t" style="left:992.00px;top:367.84px;font-size:12px;line-height:14px;color:#e3e3e3;font-weight:400;transform:scaleX(0.96);transform-origin:0 0;text-decoration:underline;text-underline-offset:2px;text-decoration-skip-ink:none;">captcha.js:1</div>
<div class="t" style="left:568.00px;top:388.84px;font-size:12px;line-height:14px;color:#e3e3e3;font-weight:400;transform:scaleX(0.9935);transform-origin:0 0;">data:image/svg+xml;...</div>
<div class="t" style="left:826.00px;top:388.84px;font-size:12px;line-height:14px;color:#929292;font-weight:400;">200</div>
<div class="t" style="left:909.00px;top:388.84px;font-size:12px;line-height:14px;color:#e3e3e3;font-weight:400;transform:scaleX(0.985);transform-origin:0 0;">svg+xml</div>
<div class="t" style="left:992.00px;top:388.84px;font-size:12px;line-height:14px;color:#e3e3e3;font-weight:400;transform:scaleX(0.96);transform-origin:0 0;text-decoration:underline;text-underline-offset:2px;text-decoration-skip-ink:none;">captcha.js:1</div>
<div class="t" style="left:568.00px;top:409.84px;font-size:12px;line-height:14px;color:#e3e3e3;font-weight:400;transform:scaleX(0.9987);transform-origin:0 0;">AmazonEmber-Light.woff2</div>
<div class="t" style="left:826.00px;top:409.84px;font-size:12px;line-height:14px;color:#e3e3e3;font-weight:400;">200</div>
<div class="t" style="left:909.00px;top:409.84px;font-size:12px;line-height:14px;color:#e3e3e3;font-weight:400;transform:scaleX(0.985);transform-origin:0 0;">font</div>
<div class="t" style="left:992.00px;top:409.84px;font-size:12px;line-height:14px;color:#e3e3e3;font-weight:400;transform:scaleX(0.96);transform-origin:0 0;"><span style="text-decoration:underline;text-underline-offset:2px;text-decoration-skip-ink:none">stylesheet.</span>...</div>
<div class="t" style="left:568.00px;top:430.84px;font-size:12px;line-height:14px;color:#e3e3e3;font-weight:400;transform:scaleX(0.9836);transform-origin:0 0;">verify</div>
<div class="t" style="left:826.00px;top:430.84px;font-size:12px;line-height:14px;color:#e3e3e3;font-weight:400;">200</div>
<div class="t" style="left:909.00px;top:430.84px;font-size:12px;line-height:14px;color:#e3e3e3;font-weight:400;transform:scaleX(0.985);transform-origin:0 0;">fetch</div>
<div class="t" style="left:992.00px;top:430.84px;font-size:12px;line-height:14px;color:#e3e3e3;font-weight:400;transform:scaleX(0.96);transform-origin:0 0;"><span style="text-decoration:underline;text-underline-offset:2px;text-decoration-skip-ink:none">challenge.j</span>...</div>
<div class="t" style="left:568.00px;top:451.84px;font-size:12px;line-height:14px;color:#e3e3e3;font-weight:400;transform:scaleX(1.0092);transform-origin:0 0;">telemetry</div>
<div class="t" style="left:826.00px;top:451.84px;font-size:12px;line-height:14px;color:#e3e3e3;font-weight:400;">200</div>
<div class="t" style="left:909.00px;top:451.84px;font-size:12px;line-height:14px;color:#e3e3e3;font-weight:400;transform:scaleX(0.985);transform-origin:0 0;">fetch</div>
<div class="t" style="left:992.00px;top:451.84px;font-size:12px;line-height:14px;color:#e3e3e3;font-weight:400;transform:scaleX(0.96);transform-origin:0 0;"><span style="text-decoration:underline;text-underline-offset:2px;text-decoration-skip-ink:none">challenge.j</span>...</div>
<div class="t" style="left:568.00px;top:472.84px;font-size:12px;line-height:14px;color:#e3e3e3;font-weight:400;transform:scaleX(1.0092);transform-origin:0 0;">telemetry</div>
<div class="t" style="left:826.00px;top:472.84px;font-size:12px;line-height:14px;color:#e3e3e3;font-weight:400;">200</div>
<div class="t" style="left:909.00px;top:472.84px;font-size:12px;line-height:14px;color:#e3e3e3;font-weight:400;transform:scaleX(0.985);transform-origin:0 0;">fetch</div>
<div class="t" style="left:992.00px;top:472.84px;font-size:12px;line-height:14px;color:#e3e3e3;font-weight:400;transform:scaleX(0.96);transform-origin:0 0;"><span style="text-decoration:underline;text-underline-offset:2px;text-decoration-skip-ink:none">challenge.j</span>...</div>
<div class="t" style="left:602.51px;top:133.53px;font-size:10px;line-height:12px;color:#e3e3e3;transform:scaleX(0.92);transform-origin:0 0">1000 ms</div>
<div class="t" style="left:697.51px;top:133.53px;font-size:10px;line-height:12px;color:#e3e3e3;transform:scaleX(0.92);transform-origin:0 0">2000 ms</div>
<div class="t" style="left:792.51px;top:133.53px;font-size:10px;line-height:12px;color:#e3e3e3;transform:scaleX(0.92);transform-origin:0 0">3000 ms</div>
<div class="t" style="left:887.51px;top:133.53px;font-size:10px;line-height:12px;color:#e3e3e3;transform:scaleX(0.92);transform-origin:0 0">4000 ms</div>
<div class="t" style="left:982.51px;top:133.53px;font-size:10px;line-height:12px;color:#e3e3e3;transform:scaleX(0.92);transform-origin:0 0">5000 ms</div>
<div class="t" style="left:1077.51px;top:133.53px;font-size:10px;line-height:12px;color:#e3e3e3;transform:scaleX(0.92);transform-origin:0 0">6000 ms</div>
<div class="t" style="left:1172.51px;top:133.53px;font-size:10px;line-height:12px;color:#e3e3e3;transform:scaleX(0.92);transform-origin:0 0">7000 ms</div>
<div class="t" style="left:1267.51px;top:133.53px;font-size:10px;line-height:12px;color:#e3e3e3;transform:scaleX(0.92);transform-origin:0 0">8000 ms</div>
<div class="t" style="left:1145.67px;top:241.84px;font-size:12px;line-height:14px;color:#f2b8b5;transform:scaleX(0.965);transform-origin:0 0">2.2 kB</div>
<div class="t" style="left:1249.83px;top:241.84px;font-size:12px;line-height:14px;color:#f2b8b5;transform:scaleX(0.97);transform-origin:0 0">701 ms</div>
<div class="t" style="left:1142.45px;top:262.84px;font-size:12px;line-height:14px;color:#e3e3e3;transform:scaleX(0.965);transform-origin:0 0">292 kB</div>
<div class="t" style="left:1256.29px;top:262.84px;font-size:12px;line-height:14px;color:#e3e3e3;transform:scaleX(0.97);transform-origin:0 0">1.86 s</div>
<div class="t" style="left:1139.23px;top:283.84px;font-size:12px;line-height:14px;color:#e3e3e3;transform:scaleX(0.965);transform-origin:0 0">65.5 kB</div>
<div class="t" style="left:1256.29px;top:283.84px;font-size:12px;line-height:14px;color:#e3e3e3;transform:scaleX(0.97);transform-origin:0 0">1.28 s</div>
<div class="t" style="left:1148.24px;top:304.84px;font-size:12px;line-height:14px;color:#e3e3e3;transform:scaleX(0.965);transform-origin:0 0">895 B</div>
<div class="t" style="left:1249.83px;top:304.84px;font-size:12px;line-height:14px;color:#e3e3e3;transform:scaleX(0.97);transform-origin:0 0">619 ms</div>
<div class="t" style="left:1148.24px;top:325.84px;font-size:12px;line-height:14px;color:#e3e3e3;transform:scaleX(0.965);transform-origin:0 0">589 B</div>
<div class="t" style="left:1249.83px;top:325.84px;font-size:12px;line-height:14px;color:#e3e3e3;transform:scaleX(0.97);transform-origin:0 0">166 ms</div>
<div class="t" style="left:1094.85px;top:346.84px;font-size:12px;line-height:14px;color:#929292;transform:scaleX(0.965);transform-origin:0 0">(memory cache)</div>
<div class="t" style="left:1245.28px;top:346.84px;font-size:12px;line-height:14px;color:#929292;transform:scaleX(0.97);transform-origin:0 0">Pending</div>
<div class="t" style="left:1094.85px;top:367.84px;font-size:12px;line-height:14px;color:#929292;transform:scaleX(0.965);transform-origin:0 0">(memory cache)</div>
<div class="t" style="left:1245.28px;top:367.84px;font-size:12px;line-height:14px;color:#929292;transform:scaleX(0.97);transform-origin:0 0">Pending</div>
<div class="t" style="left:1094.85px;top:388.84px;font-size:12px;line-height:14px;color:#929292;transform:scaleX(0.965);transform-origin:0 0">(memory cache)</div>
<div class="t" style="left:1245.28px;top:388.84px;font-size:12px;line-height:14px;color:#929292;transform:scaleX(0.97);transform-origin:0 0">Pending</div>
<div class="t" style="left:1139.23px;top:409.84px;font-size:12px;line-height:14px;color:#e3e3e3;transform:scaleX(0.965);transform-origin:0 0">31.1 kB</div>
<div class="t" style="left:1249.83px;top:409.84px;font-size:12px;line-height:14px;color:#e3e3e3;transform:scaleX(0.97);transform-origin:0 0">125 ms</div>
<div class="t" style="left:1148.24px;top:430.84px;font-size:12px;line-height:14px;color:#e3e3e3;transform:scaleX(0.965);transform-origin:0 0">794 B</div>
<div class="t" style="left:1249.83px;top:430.84px;font-size:12px;line-height:14px;color:#e3e3e3;transform:scaleX(0.97);transform-origin:0 0">838 ms</div>
<div class="t" style="left:1145.67px;top:451.84px;font-size:12px;line-height:14px;color:#e3e3e3;transform:scaleX(0.965);transform-origin:0 0">1.3 kB</div>
<div class="t" style="left:1249.83px;top:451.84px;font-size:12px;line-height:14px;color:#e3e3e3;transform:scaleX(0.97);transform-origin:0 0">616 ms</div>
<div class="t" style="left:1145.67px;top:472.84px;font-size:12px;line-height:14px;color:#e3e3e3;transform:scaleX(0.965);transform-origin:0 0">1.4 kB</div>
<div class="t" style="left:1249.83px;top:472.84px;font-size:12px;line-height:14px;color:#e3e3e3;transform:scaleX(0.97);transform-origin:0 0">235 ms</div>
<div class="a" style="left:527px;top:221px;width:767px;height:44px;border:3.3px solid #ff0000;border-radius:2px"></div>
</body></html>
